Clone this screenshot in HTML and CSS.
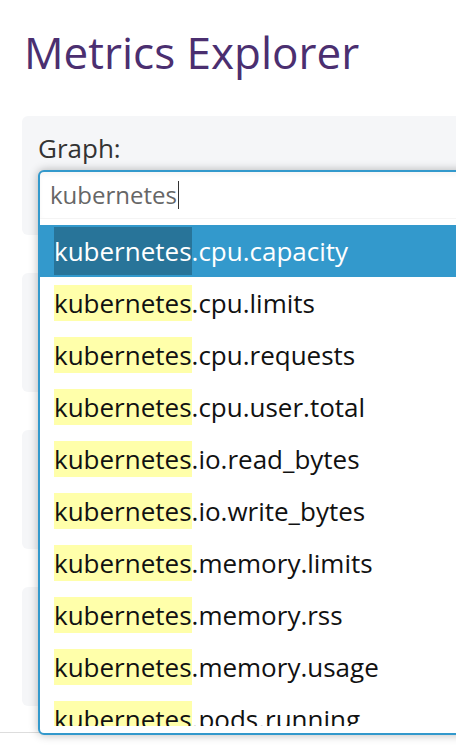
FILE: index.html
```html
<!DOCTYPE html>
<html lang="en">
<head>
<meta charset="utf-8">
<title>Metrics Explorer</title>
<link rel="stylesheet" href="styles.css">
</head>
<body>
<div class="page">
  <h1 class="title">Metrics Explorer</h1>
  <div class="panels">
    <section class="panel">
      <div class="label">Graph:</div>
      <div class="combo">
        <div class="combo-box">
          <div class="combo-input"><span class="typed">kubernetes</span><span class="caret"></span></div>
          <ul class="options">
            <li class="option selected"><mark class="hit">kubernetes</mark>.cpu.capacity</li>
            <li class="option"><mark class="hit">kubernetes</mark>.cpu.limits</li>
            <li class="option"><mark class="hit">kubernetes</mark>.cpu.requests</li>
            <li class="option"><mark class="hit">kubernetes</mark>.cpu.user.total</li>
            <li class="option"><mark class="hit">kubernetes</mark>.io.read_bytes</li>
            <li class="option"><mark class="hit">kubernetes</mark>.io.write_bytes</li>
            <li class="option"><mark class="hit">kubernetes</mark>.memory.limits</li>
            <li class="option"><mark class="hit">kubernetes</mark>.memory.rss</li>
            <li class="option"><mark class="hit">kubernetes</mark>.memory.usage</li>
            <li class="option"><mark class="hit">kubernetes</mark>.pods.running</li>
          </ul>
        </div>
      </div>
    </section>
    <section class="panel"></section>
    <section class="panel"></section>
    <section class="panel"></section>
  </div>
  <div class="footer"></div>
</div>
</body>
</html>
```

FILE: styles.css
```css
html, body {
  margin: 0;
  padding: 0;
  background: #ffffff;
  overflow: hidden;
}

body {
  font-family: "Open Sans", "Noto Sans", sans-serif;
  width: 456px;
  height: 756px;
}

.page {
  display: flex;
  flex-direction: column;
}

.title {
  margin: 27px 0 0 24px;
  font-size: 44px;
  line-height: 50px;
  font-weight: 400;
  color: #4b2f70;
  white-space: nowrap;
}

.panels {
  margin: 39px 0 0 22px;
  display: flex;
  flex-direction: column;
  gap: 38px;
}

.panel {
  height: 119px;
  width: 460px;
  background: #f5f6f8;
  border-radius: 6px;
  padding: 16px 0 0 16px;
  box-sizing: border-box;
}

.label {
  font-size: 26px;
  line-height: 32px;
  color: #333333;
  margin-bottom: 6px;
}

.combo {
  position: relative;
  height: 48px;
}

.combo-box {
  position: absolute;
  top: 0;
  left: 0;
  width: 460px;
  height: 565px;
  box-sizing: border-box;
  border: 2px solid #3399cc;
  border-radius: 6px;
  background: #ffffff;
  box-shadow: 0 0 10px rgba(0, 0, 0, 0.28);
  display: flex;
  flex-direction: column;
  padding-bottom: 7px;
  z-index: 2;
}

.combo-input {
  height: 46px;
  padding-left: 10px;
  font-size: 24px;
  line-height: 46px;
  color: #666666;
  box-shadow: inset 0 3px 5px rgba(0, 0, 0, 0.04);
  border-bottom: 1px solid #f4f4f4;
  display: flex;
  align-items: center;
}

.caret {
  display: inline-block;
  width: 1px;
  height: 28px;
  background: #333333;
  margin-left: 1px;
}

.options {
  list-style: none;
  margin: 6px 0 0 0;
  padding: 0;
  flex: 1;
  overflow: hidden;
}

.option {
  height: 52px;
  line-height: 52px;
  padding-left: 14px;
  font-size: 26px;
  color: #111111;
  white-space: nowrap;
}

.hit {
  background: #ffffaa;
  color: inherit;
}

.option.selected {
  background: #3399cc;
  color: #ffffff;
}

.option.selected .hit {
  background: #287499;
  padding: 6px 0;
}

.footer {
  margin-top: 26px;
  border-top: 1px solid #dddddd;
  height: 30px;
}
```
